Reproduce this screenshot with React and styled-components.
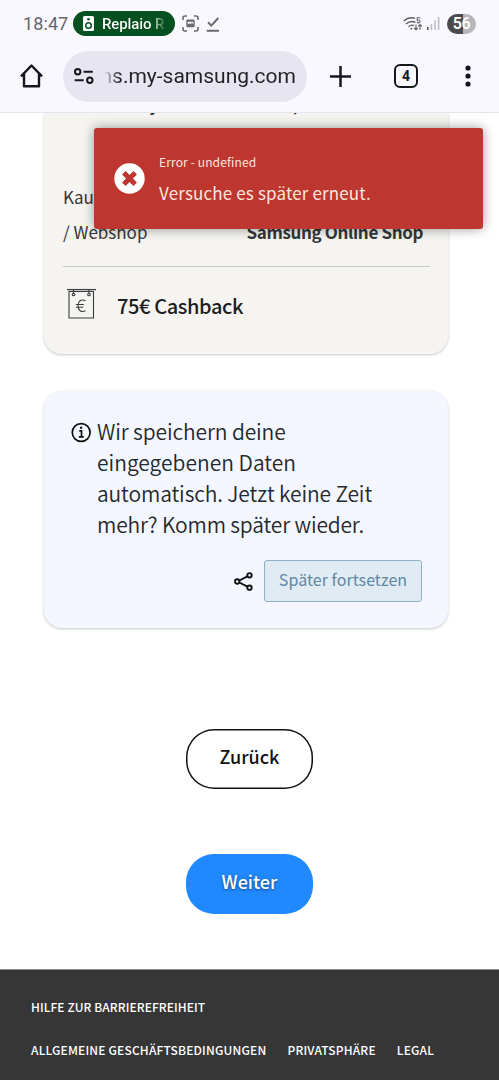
import styled, { createGlobalStyle } from "styled-components";

const GlobalStyle = createGlobalStyle`
  * {
    box-sizing: border-box;
  }
  body {
    margin: 0;
    background: #ffffff;
    font-family: "Noto Sans CJK JP", "Noto Sans", sans-serif;
    color: #25282d;
  }
`

const Screen = styled.div`
  position: relative;
  display: flex;
  flex-direction: column;
  width: 499px;
  height: 1080px;
  overflow: hidden;
`

const BrowserTop = styled.header`
  flex: none;
  height: 113px;
  background: #f9f8ff;
  border-bottom: 1px solid #e5e4ee;
  font-family: Roboto, sans-serif;
`

const StatusBar = styled.div`
  display: flex;
  align-items: center;
  height: 46px;
  padding: 1px 23px 0 23px;
`

const Clock = styled.span`
  width: 50px;
  font-size: 18px;
  letter-spacing: 0.1px;
  color: #65656a;
`

const MediaChip = styled.div`
  display: flex;
  align-items: center;
  width: 102px;
  height: 25px;
  padding-left: 10px;
  border-radius: 13px;
  background: #05501f;
  color: #ffffff;
`

const ChipText = styled.span`
  margin-left: 8px;
  font-size: 15px;
  font-weight: 500;
  letter-spacing: -0.1px;
  white-space: nowrap;
  background: linear-gradient(90deg, #ffffff 78%, rgba(255, 255, 255, 0.2) 100%);
  background-clip: text;
  color: transparent;
`

const StatusIcon = styled.svg`
  flex: none;
  margin-left: ${(props) => props.$gap}px;
`

const StatusRight = styled.div`
  display: flex;
  align-items: center;
  margin-left: auto;
`

const Battery = styled.div`
  width: 29px;
  height: 20px;
  margin-left: 7px;
  border-radius: 10px;
  background: linear-gradient(90deg, #4b4b4e 56%, #b6b6bb 56%);
  color: #ffffff;
  font-size: 16px;
  font-weight: 600;
  letter-spacing: -0.5px;
  line-height: 20px;
  text-align: center;
`

const Toolbar = styled.div`
  display: flex;
  align-items: center;
  height: 60px;
  padding: 0 20px 0 20px;
`

const AddressBar = styled.div`
  display: flex;
  align-items: center;
  width: 244px;
  height: 51px;
  margin-left: 20px;
  padding-left: 11px;
  border-radius: 26px;
  background: #e7e5ef;
`

const Url = styled.div`
  display: flex;
  justify-content: flex-end;
  width: 191px;
  margin-left: 11px;
  overflow: hidden;
  font-size: 21px;
  white-space: nowrap;
  background: linear-gradient(90deg, rgba(32, 33, 40, 0.1) 0%, #202128 8%);
  background-clip: text;
  color: transparent;
`

const ToolbarIcon = styled.svg`
  flex: none;
  margin-left: ${(props) => props.$gap || 0}px;
`

const TabCount = styled.div`
  width: 24px;
  height: 24px;
  margin-left: 43px;
  border: 2.4px solid #16171c;
  border-radius: 6px;
  color: #16171c;
  font-size: 14px;
  font-weight: 700;
  line-height: 20px;
  text-align: center;
`

const Page = styled.main`
  flex: 1;
  display: flex;
  flex-direction: column;
  align-items: center;
  min-height: 0;
  overflow: hidden;
`

const Card = styled.section`
  flex: none;
  width: 404px;
  margin-right: 7px;
  border-radius: 18px;
  box-shadow: 0 1px 3px rgba(0, 0, 0, 0.22);
`

const ProductCard = styled(Card)`
  height: 241px;
  padding: 0 18px 0 19px;
  border-radius: 0 0 18px 18px;
  background: #f5f4f0;
`

const ProductName = styled.div`
  height: 74px;
  margin-top: -26px;
  font-size: 18px;
  font-weight: 500;
  line-height: 32px;
  text-align: center;
`

const ShopRow = styled.div`
  display: flex;
  align-items: flex-end;
  justify-content: space-between;
  height: 88px;
  padding-right: 7px;
  font-size: 17px;
  line-height: 35px;
`

const ShopLabel = styled.div`
  width: 110px;
  color: #33363a;
`

const ShopValue = styled.div`
  font-weight: 700;
  color: #33363a;
  letter-spacing: -0.37px;
  white-space: nowrap;
`

const CashbackRow = styled.div`
  display: flex;
  align-items: flex-start;
  height: 76px;
  margin-top: 17px;
  padding-top: 21px;
  border-top: 1px solid #c9c9c7;
  font-size: 20px;
  font-weight: 500;
  letter-spacing: -0.38px;
  line-height: 30px;
  color: #1c1e22;
`

const CashbackText = styled.span`
  margin-left: 21px;
  padding-top: 3px;
`

const SaveCard = styled(Card)`
  height: 237px;
  margin-top: 37px;
  padding: 25px 26px 0 27px;
  background: #f4f7ff;
`

const SaveInfo = styled.div`
  display: flex;
  align-items: flex-start;
`

const InfoIcon = styled.svg`
  flex: none;
  margin-top: 6px;
`

const SaveText = styled.p`
  margin: 0 0 0 5px;
  font-size: 21px;
  font-weight: 350;
  line-height: 31px;
  white-space: nowrap;
`

const Line = styled.span`
  display: block;
  letter-spacing: ${(props) => props.$spacing || 0}px;
`

const SaveActions = styled.div`
  display: flex;
  align-items: center;
  justify-content: flex-end;
  margin-top: 20px;
`

const ContinueButton = styled.button`
  width: 158px;
  height: 42px;
  margin-left: 11px;
  padding: 0 0 5px;
  border: 1px solid #8fb0c4;
  border-radius: 3px;
  background: #e1ebf4;
  color: #5d87a2;
  font: inherit;
  font-size: 16px;
  letter-spacing: 0.05px;
  white-space: nowrap;
`

const PillButton = styled.button`
  flex: none;
  width: 127px;
  height: 60px;
  margin-top: ${(props) => props.$top}px;
  padding: 0 0 7px;
  border: none;
  border-radius: 28px;
  box-shadow: ${(props) => (props.$primary ? "none" : "inset 0 0 0 1.5px #111111")};
  background: ${(props) => (props.$primary ? "#2189ff" : "#ffffff")};
  color: ${(props) => (props.$primary ? "#ffffff" : "#111111")};
  text-shadow: ${(props) => (props.$primary ? "0 1px 3px rgba(0, 0, 0, 0.5)" : "none")};
  font: inherit;
  font-size: 18px;
  font-weight: 500;
`

const Footer = styled.footer`
  flex: none;
  display: flex;
  flex-wrap: wrap;
  align-content: flex-start;
  width: 100%;
  height: 111px;
  margin-top: auto;
  padding: 15px 31px 0;
  border-top: 1px solid #8b8f8e;
  background: #363636;
`

const FooterLink = styled.a`
  flex: none;
  width: ${(props) => props.$width};
  margin-right: ${(props) => props.$gap || 0}px;
  color: #ffffff;
  font-size: 12px;
  font-weight: 500;
  letter-spacing: ${(props) => props.$spacing || 0.17}px;
  line-height: 43px;
  white-space: nowrap;
`

const Toast = styled.div`
  position: absolute;
  top: 128px;
  left: 94px;
  display: flex;
  align-items: center;
  width: 389px;
  height: 101px;
  padding-left: 20px;
  border-radius: 3px;
  background: #bd362f;
  box-shadow: 0 0 12px rgba(0, 0, 0, 0.4);
  color: #fbe6df;
`

const ToastBody = styled.div`
  margin-left: 14px;
  padding-top: 2px;
`

const ToastTitle = styled.div`
  font-size: 12px;
  line-height: 20px;
  letter-spacing: 0.13px;
`

const ToastMessage = styled.div`
  margin-top: 6px;
  font-size: 17px;
  line-height: 30px;
  letter-spacing: 0.15px;
`

const ChromeHeader = () => {
  return (
    <BrowserTop>
      <StatusBar>
        <Clock>18:47</Clock>
        <MediaChip>
          <svg width="11" height="15" viewBox="0 0 11 15">
            <rect width="11" height="15" rx="1.5" fill="#fff" />
            <circle cx="5.5" cy="3.3" r="1.3" fill="#05501f" />
            <circle cx="5.5" cy="9.4" r="3.5" fill="#05501f" />
            <circle cx="5.5" cy="9.4" r="2" fill="#fff" />
          </svg>
          <ChipText>Replaio R</ChipText>
        </MediaChip>
        <StatusIcon $gap={7} width="17" height="17" viewBox="0 0 17 17" fill="none" stroke="#6a6a6e" strokeWidth="1.6">
          <path d="M1 5V3a2 2 0 0 1 2-2h2M12 1h2a2 2 0 0 1 2 2v2M16 12v2a2 2 0 0 1-2 2h-2M5 16H3a2 2 0 0 1-2-2v-2" />
          <rect x="5" y="5.3" width="7" height="6.2" rx="0.6" strokeWidth="1.4" />
          <path d="M5 11.5V10l2.2-1.8 1.3 1 1.3-1.4L12 9.8v1.7z" fill="#6a6a6e" stroke="none" />
          <path d="M5 6h7" />
        </StatusIcon>
        <StatusIcon $gap={7} width="14" height="16" viewBox="0 0 14 16" fill="none" stroke="#6a6a6e" strokeWidth="2">
          <path d="M2 6.3 5.3 9.6 12.3 2M.8 14.7h12.2" />
        </StatusIcon>
        <StatusRight>
          <svg width="20" height="16" viewBox="0 0 20 16" fill="none" stroke="#5d5d61" strokeWidth="1.4">
            <path d="M.7 5Q6 .3 12 2.4M3 8Q7.5 4.2 12.5 6.3M5.5 10.7Q8.5 8.3 11 9.6" />
            <circle cx="8.3" cy="12.7" r=".9" fill="#5d5d61" stroke="none" />
            <path d="M17.3 1.8h-3v2.4c3-.8 3.6 2.6 1.4 2.7-.8 0-1.3-.3-1.6-.7" strokeWidth="1.1" />
            <path d="M13 8.5v5M11.2 12l1.8 1.8 1.8-1.8M17 13.8V8.5M15.2 10.3 17 8.5l1.8 1.8" strokeWidth="1.1" />
          </svg>
          <StatusIcon $gap={4} width="13" height="13" viewBox="0 0 13 13">
            <rect x="0" y="10" width="1.6" height="3" fill="#59595d" />
            <rect x="3.6" y="7" width="1.6" height="6" fill="#bdbdc3" />
            <rect x="7.2" y="3.5" width="1.6" height="9.5" fill="#bdbdc3" />
            <rect x="10.8" y="0" width="1.6" height="13" fill="#bdbdc3" />
          </StatusIcon>
          <Battery>56</Battery>
        </StatusRight>
      </StatusBar>
      <Toolbar>
        <ToolbarIcon width="23" height="24" viewBox="0 0 23 24" fill="none" stroke="#16171c" strokeWidth="2.4" strokeLinejoin="round">
          <path d="M1 12.3 11.5 1.5 22 12.3M4 10v12.3h15V10" />
        </ToolbarIcon>
        <AddressBar>
          <svg width="20" height="16" viewBox="0 0 20 16" fill="none" stroke="#16171c" strokeWidth="2">
            <circle cx="3.7" cy="3.8" r="2.7" />
            <path d="M9.5 3.8h9.3M.7 12.2h9" />
            <circle cx="15.8" cy="12.2" r="2.7" />
          </svg>
          <Url>ns.my-samsung.com</Url>
        </AddressBar>
        <ToolbarIcon $gap={23} width="21" height="21" viewBox="0 0 21 21" stroke="#16171c" strokeWidth="2.5">
          <path d="M10.5 0v21M0 10.5h21" />
        </ToolbarIcon>
        <TabCount>4</TabCount>
        <ToolbarIcon $gap={46.5} width="6" height="22" viewBox="0 0 6 22" fill="#16171c">
          <circle cx="3" cy="3" r="2.6" />
          <circle cx="3" cy="11" r="2.6" />
          <circle cx="3" cy="19" r="2.6" />
        </ToolbarIcon>
      </Toolbar>
    </BrowserTop>
  )
}

const App = () => {
  return (
    <Screen>
      <GlobalStyle />
      <ChromeHeader />
      <Page>
        <ProductCard>
          <ProductName>
            <Line $spacing={0.5}>Galaxy A57 5G 128 GB, Lilac Rose</Line>
            <Line $spacing={0.9}>(SM-A576BZAADBT)</Line>
          </ProductName>
          <ShopRow>
            <ShopLabel>
              <Line>Kaufort</Line>
              <Line>/ Webshop</Line>
            </ShopLabel>
            <ShopValue>Samsung Online Shop</ShopValue>
          </ShopRow>
          <CashbackRow>
            <svg width="33" height="32" viewBox="0 0 33 32" fill="none" stroke="#3a3c40" strokeWidth="1.1">
              <path d="M4 1.6h29" strokeWidth="1.3" />
              <path d="M6 3.5h24.5v26.5h-24.5z" />
              <path d="M10.5 1.5v4M26 1.5v4" />
              <circle cx="10.5" cy="6.5" r="1.3" />
              <circle cx="26" cy="6.5" r="1.3" />
              <path d="M22.5 12.8c-4.5-2.2-7.5.5-7.5 5s3 7 7.5 5M12.8 16.5h8M12.8 19.2h7.5" />
            </svg>
            <CashbackText>75€ Cashback</CashbackText>
          </CashbackRow>
        </ProductCard>
        <SaveCard>
          <SaveInfo>
            <InfoIcon width="21" height="21" viewBox="0 0 21 21" fill="none" stroke="#111" strokeWidth="1.7">
              <circle cx="10.2" cy="10.5" r="8.9" />
              <path d="M8.3 8.8h2.2v6M7.9 14.9h4.9" />
              <circle cx="10.1" cy="5.8" r="1.2" fill="#111" stroke="none" />
            </InfoIcon>
            <SaveText>
              <Line $spacing={-0.12}>Wir speichern deine</Line>
              <Line>eingegebenen Daten</Line>
              <Line $spacing={-0.12}>automatisch. Jetzt keine Zeit</Line>
              <Line $spacing={-0.17}>mehr? Komm später wieder.</Line>
            </SaveText>
          </SaveInfo>
          <SaveActions>
            <svg width="19" height="19" viewBox="0 0 19 19" fill="none" stroke="#111" strokeWidth="1.9">
              <circle cx="3.2" cy="9.5" r="2.2" />
              <circle cx="15.5" cy="3.3" r="2.2" />
              <circle cx="15.5" cy="15.7" r="2.2" />
              <path d="M5.3 8.5 13.4 4.4M5.3 10.5l8.1 4.1" />
            </svg>
            <ContinueButton>Später fortsetzen</ContinueButton>
          </SaveActions>
        </SaveCard>
        <PillButton $top={101}>Zurück</PillButton>
        <PillButton $top={65} $primary>Weiter</PillButton>
        <Footer>
          <FooterLink $width="100%" $spacing={0.07}>HILFE ZUR BARRIEREFREIHEIT</FooterLink>
          <FooterLink $gap={21}>ALLGEMEINE GESCHÄFTSBEDINGUNGEN</FooterLink>
          <FooterLink $gap={21}>PRIVATSPHÄRE</FooterLink>
          <FooterLink>LEGAL</FooterLink>
        </Footer>
      </Page>
      <Toast>
        <svg width="31" height="31" viewBox="0 0 31 31">
          <circle cx="15.5" cy="15.5" r="15.2" fill="#fff" />
          <path d="M9.8 9.8 21.2 21.2M21.2 9.8 9.8 21.2" stroke="#bd362f" strokeWidth="5" />
        </svg>
        <ToastBody>
          <ToastTitle>Error - undefined</ToastTitle>
          <ToastMessage>Versuche es später erneut.</ToastMessage>
        </ToastBody>
      </Toast>
    </Screen>
  )
}
export default App;
